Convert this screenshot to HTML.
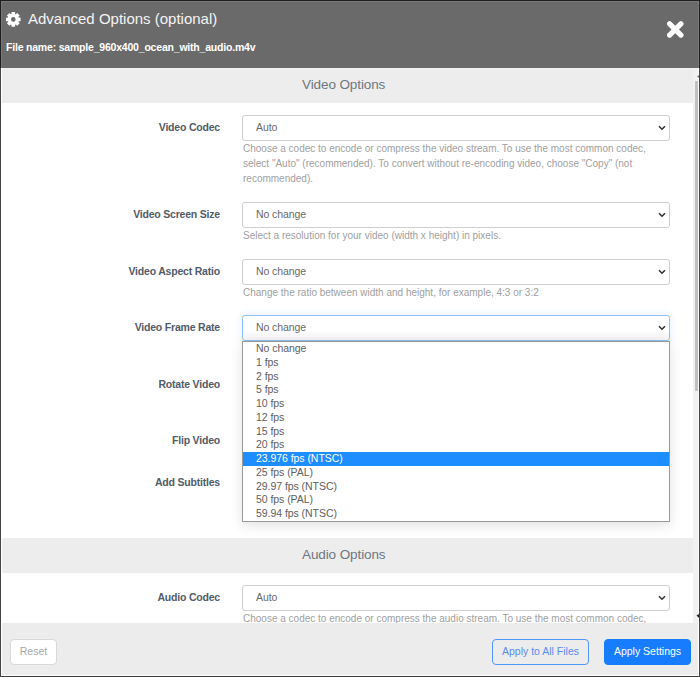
<!DOCTYPE html>
<html><head><meta charset="utf-8">
<style>
*{box-sizing:border-box;margin:0;padding:0}
html,body{width:700px;height:677px;overflow:hidden}
body{position:relative;background:#454545;font-family:"Liberation Sans",sans-serif}
.a{position:absolute;white-space:nowrap;line-height:1}
#hdr{position:absolute;left:1px;top:1px;width:698px;height:67px;background:#6a6a6a;border-top:1px solid #787878;border-left:1px solid #787878;border-right:1px solid #787878}
#bodyw{position:absolute;left:1px;top:68px;width:698px;height:608px;background:#fff}
.sec{position:absolute;left:2px;width:691px;height:34px;background:#ededed}
.sect{position:absolute;font-size:13.5px;letter-spacing:-0.1px;color:#6d7781;line-height:1}
.lbl{position:absolute;right:480px;font-size:10.5px;font-weight:bold;letter-spacing:-0.2px;color:#525c68;line-height:1;white-space:nowrap}
.sel{position:absolute;left:242px;width:428px;height:26px;border:1px solid #cfcfcf;border-radius:3px;background:#fff}
.sel .v{position:absolute;left:13px;top:6px;font-size:10.5px;letter-spacing:-0.1px;color:#686868;line-height:1;white-space:nowrap}
.chev{position:absolute;left:415px;top:9.4px;width:8px;height:6px}
.help{position:absolute;left:243px;font-size:10px;color:#a0a0a0;line-height:15px;white-space:nowrap}
#dd{position:absolute;left:242px;top:341px;width:428px;height:181px;border:1px solid #9a9a9a;background:#fff;box-shadow:0 3px 12px rgba(0,0,0,0.12)}
#dd div{height:13.75px;padding-left:13px;font-size:10.5px;letter-spacing:-0.05px;color:#5e5e5e;line-height:13.75px;white-space:nowrap}
#dd div.hl{background:#1e8dff;color:#fff}
#ftr{position:absolute;left:2px;top:623px;width:696px;height:52px;background:#ececec}
.btn{position:absolute;top:639px;height:26px;border-radius:4px;font-size:10.5px;line-height:22px;text-align:center;white-space:nowrap}
#sb{position:absolute;left:693px;top:68px;width:5px;height:555px;background:#f1f1f1}
#thumb{position:absolute;left:695px;top:81px;width:3px;height:310px;background:#c1c1c1}
</style></head>
<body>
<div style="position:absolute;left:0;top:0;width:700px;height:1px;background:#1f1f1f"></div>
<div id="hdr"></div>
<div style="position:absolute;left:0;top:0;width:1px;height:68px;background:#1f1f1f"></div><div style="position:absolute;left:699px;top:0;width:1px;height:68px;background:#1f1f1f"></div>
<div style="position:absolute;left:0;top:676px;width:700px;height:1px;background:#3c3c3c"></div>
<svg style="position:absolute;left:5px;top:11px" width="17" height="17" viewBox="-8.3 -8.4 17 17"><path fill="#fff" fill-rule="evenodd" d="M-1.84 -5.29 L-1.75 -7.29 L1.75 -7.29 L1.84 -5.29 L2.44 -5.04 L3.92 -6.39 L6.39 -3.92 L5.04 -2.44 L5.29 -1.84 L7.29 -1.75 L7.29 1.75 L5.29 1.84 L5.04 2.44 L6.39 3.92 L3.92 6.39 L2.44 5.04 L1.84 5.29 L1.75 7.29 L-1.75 7.29 L-1.84 5.29 L-2.44 5.04 L-3.92 6.39 L-6.39 3.92 L-5.04 2.44 L-5.29 1.84 L-7.29 1.75 L-7.29 -1.75 L-5.29 -1.84 L-5.04 -2.44 L-6.39 -3.92 L-3.92 -6.39 L-2.44 -5.04Z M2.3 0A2.3 2.3 0 1 0 -2.3 0A2.3 2.3 0 1 0 2.3 0Z"/></svg>
<div class="a" style="left:28px;top:11px;font-size:15px;color:#f4f4f4">Advanced Options (optional)</div>
<div class="a" style="left:6px;top:42px;font-size:10.5px;font-weight:bold;letter-spacing:-0.2px;color:#fff">File name: sample_960x400_ocean_with_audio.m4v</div>
<svg style="position:absolute;left:667px;top:21px" width="17" height="17" viewBox="0 0 17 17"><path d="M2.6 2.8L13.9 14.1M13.9 2.8L2.6 14.1" stroke="#fff" stroke-width="5.2" stroke-linecap="round"/></svg>

<div id="bodyw"></div>
<div class="sec" style="top:68px;height:35px;border-top:2px solid #f0f0f0"></div>
<div class="sect" style="left:302px;top:78px">Video Options</div>

<div class="lbl" style="top:122px">Video Codec</div>
<div class="sel" style="top:115px"><div class="v">Auto</div><svg class="chev" viewBox="0 0 8 6"><path d="M1 1.2L4 4.2L7 1.2" stroke="#333" stroke-width="1.6" fill="none"/></svg></div>
<div class="help" style="top:141px">Choose a codec to encode or compress the video stream. To use the most common codec,<br>select "Auto" (recommended). To convert without re-encoding video, choose "Copy" (not<br>recommended).</div>

<div class="lbl" style="top:209px">Video Screen Size</div>
<div class="sel" style="top:202px"><div class="v">No change</div><svg class="chev" viewBox="0 0 8 6"><path d="M1 1.2L4 4.2L7 1.2" stroke="#333" stroke-width="1.6" fill="none"/></svg></div>
<div class="help" style="top:228px">Select a resolution for your video (width x height) in pixels.</div>

<div class="lbl" style="top:266px">Video Aspect Ratio</div>
<div class="sel" style="top:259px"><div class="v">No change</div><svg class="chev" viewBox="0 0 8 6"><path d="M1 1.2L4 4.2L7 1.2" stroke="#333" stroke-width="1.6" fill="none"/></svg></div>
<div class="help" style="top:285px">Change the ratio between width and height, for example, 4:3 or 3:2</div>

<div class="lbl" style="top:322px">Video Frame Rate</div>
<div class="sel" style="top:315px;border-color:#8cc0f4;background:linear-gradient(#fff 55%,#f4f4f4);box-shadow:0 0 5px 3px rgba(128,189,255,0.13)"><div class="v">No change</div><svg class="chev" viewBox="0 0 8 6"><path d="M1 1.2L4 4.2L7 1.2" stroke="#333" stroke-width="1.6" fill="none"/></svg></div>

<div class="lbl" style="top:379px">Rotate Video</div>
<div class="lbl" style="top:435px">Flip Video</div>
<div class="lbl" style="top:477px">Add Subtitles</div>

<div id="dd">
<div>No change</div><div>1 fps</div><div>2 fps</div><div>5 fps</div><div>10 fps</div><div>12 fps</div><div>15 fps</div><div>20 fps</div><div class="hl">23.976 fps (NTSC)</div><div>25 fps (PAL)</div><div>29.97 fps (NTSC)</div><div>50 fps (PAL)</div><div>59.94 fps (NTSC)</div>
</div>

<div class="sec" style="top:538px;height:35px"></div>
<div class="sect" style="left:302px;top:548px">Audio Options</div>
<div class="lbl" style="top:592px">Audio Codec</div>
<div class="sel" style="top:585px"><div class="v">Auto</div><svg class="chev" viewBox="0 0 8 6"><path d="M1 1.2L4 4.2L7 1.2" stroke="#333" stroke-width="1.6" fill="none"/></svg></div>
<div class="help" style="top:611px">Choose a codec to encode or compress the audio stream. To use the most common codec,</div>

<div id="sb"></div>
<div id="thumb"></div>
<svg style="position:absolute;left:694px;top:72px" width="6" height="8" viewBox="0 0 6 8"><path d="M3 4.5L5 3V6Z" fill="#777"/></svg>
<svg style="position:absolute;left:694px;top:611px" width="6" height="9" viewBox="0 0 6 9"><path d="M2.5 4.5L5 3V7Z" fill="#222"/></svg>

<div id="ftr"></div>
<div class="btn" style="left:10px;width:47px;border:1px solid #d8d8d8;background:#fff;color:#a8a8a8">Reset</div>
<div class="btn" style="left:492px;width:97px;border:1px solid #4f97f7;color:#5a8cf0">Apply to All Files</div>
<div class="btn" style="left:604px;width:87px;background:#187cff;border:1px solid #187cff;color:#fff">Apply Settings</div>
</body></html>
